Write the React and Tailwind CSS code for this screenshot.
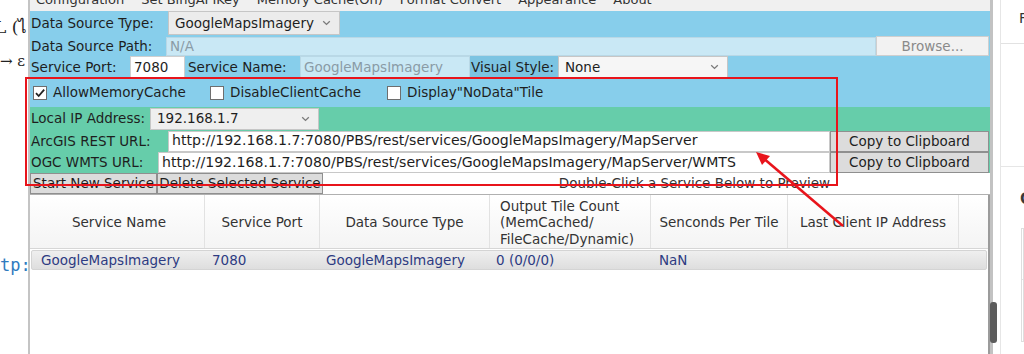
import React from "react";

function Chevron() {
  return (
    <svg width="9" height="6" viewBox="0 0 9 6" className="shrink-0">
      <path d="M1.2 1.2L4.5 4.4L7.8 1.2" stroke="#7a7a7a" strokeWidth="1.3" fill="none" />
    </svg>
  );
}

function Checkbox({ checked }) {
  return (
    <span className="w-[14px] h-[14px] shrink-0 border border-[#6e6e6e] bg-white flex items-center justify-center">
      {checked && (
        <svg width="12" height="12" viewBox="0 0 12 12">
          <path d="M2 6.2L4.7 9L10.2 2.6" stroke="#222" strokeWidth="1.8" fill="none" />
        </svg>
      )}
    </span>
  );
}

function Select({ value, className }) {
  return (
    <div className={"flex items-center justify-between border border-[#c6c6c6] bg-[#ececec] pl-[6px] pr-[8px] " + className}>
      <span className="whitespace-nowrap">{value}</span>
      <Chevron />
    </div>
  );
}

function GreyButton({ children, className }) {
  return (
    <div className={"flex items-center justify-center border border-[#8f8f8f] bg-[#dcdcdc] whitespace-nowrap " + className}>
      {children}
    </div>
  );
}

export default function App() {
  return (
    <div className="relative w-[1024px] h-[354px] overflow-hidden bg-white flex font-['DejaVu_Sans',sans-serif] text-[13.5px] text-[#1e1e1e]">
      {/* left strip (background document) */}
      <div className="w-[28px] shrink-0 flex flex-col overflow-hidden font-['DejaVu_Serif',serif] text-[#222]">
        <div className="h-[20px] -mt-[12px] pl-[15px] text-[16px] leading-[20px]">ᆢ</div>
        <div className="mt-[8px] -ml-[5px] whitespace-nowrap text-[17px] leading-[22px]">L (ไ</div>
        <div className="mt-[13px] whitespace-nowrap text-[15px] leading-[20px]">→ ε</div>
        <div className="mt-[183px] whitespace-nowrap font-['DejaVu_Sans_Mono',monospace] text-[17px] leading-[22px] text-[#2f7bbf]">tp:</div>
      </div>

      {/* application window */}
      <div className="w-[962px] shrink-0 flex flex-col border-l-2 border-[#c4c4c4]">
        {/* menu bar (scrolled partly out of view) */}
        <div className="h-[11px] shrink-0 overflow-hidden bg-[#f0f0f0]">
          <div className="-mt-[8px] flex pl-[6px] gap-[17px] leading-[16px] text-[13px] text-[#333] whitespace-nowrap">
            <span>Configuration</span>
            <span>Set BingAPIKey</span>
            <span>Memory Cache(On)</span>
            <span>Format Convert</span>
            <span>Appearance</span>
            <span>About</span>
          </div>
        </div>

        {/* blue section */}
        <div className="bg-[#87ceeb] flex flex-col">
          <div className="h-[24px] flex items-stretch">
            <div className="w-[138px] pl-[1px] flex items-center whitespace-nowrap">Data Source Type:</div>
            <Select value="GoogleMapsImagery" className="w-[172px]" />
          </div>
          <div className="h-[21px] flex items-center pt-[1px]">
            <div className="w-[136px] pl-[1px] whitespace-nowrap">Data Source Path:</div>
            <div className="w-[710px] h-[19px] bg-[#c9e8f5] border border-[#b9d8e6] flex items-center pl-[3px] text-[#8a9ba6]">N/A</div>
            <div className="w-[113px] h-[20px] bg-[#f2f2f2] border border-[#cfcfcf] flex items-center justify-center text-[#8a8a8a]">Browse...</div>
          </div>
          <div className="h-[22px] flex items-stretch">
            <div className="w-[100px] pl-[1px] flex items-center whitespace-nowrap">Service Port:</div>
            <div className="w-[55px] bg-white border border-[#cfcfcf] flex items-center pl-[3px]">7080</div>
            <div className="w-[115px] pl-[3px] flex items-center whitespace-nowrap">Service Name:</div>
            <div className="w-[170px] bg-[#c9e8f5] border border-[#b9d8e6] flex items-center pl-[3px] text-[#8a9ba6]">GoogleMapsImagery</div>
            <div className="w-[88px] bg-[#7cc4e2] flex items-center pl-[1px] whitespace-nowrap">Visual Style:</div>
            <Select value="None" className="w-[170px] bg-[#f6f6f6]" />
          </div>
          <div className="h-[29px] flex items-center pl-[3px]">
            <div className="w-[177px] flex items-center gap-[6px]">
              <Checkbox checked />
              <span className="whitespace-nowrap">AllowMemoryCache</span>
            </div>
            <div className="w-[177px] flex items-center gap-[6px]">
              <Checkbox />
              <span className="whitespace-nowrap">DisableClientCache</span>
            </div>
            <div className="flex items-center gap-[6px]">
              <Checkbox />
              <span className="whitespace-nowrap">Display"NoData"Tile</span>
            </div>
          </div>
        </div>

        {/* green section */}
        <div className="bg-[#66cdaa] flex flex-col">
          <div className="h-[23px] flex items-center">
            <div className="w-[120px] pl-[1px] whitespace-nowrap">Local IP Address:</div>
            <Select value="192.168.1.7" className="w-[169px] h-[22px] bg-[#efefef]" />
          </div>
          <div className="h-[22px] flex items-center">
            <div className="w-[138px] pl-[1px] whitespace-nowrap">ArcGIS REST URL:</div>
            <div className="w-[662px] h-[21px] bg-white border border-[#c8c8c8] flex items-center pl-[3px] whitespace-nowrap text-[14.1px]">
              http://192.168.1.7:7080/PBS/rest/services/GoogleMapsImagery/MapServer
            </div>
            <GreyButton className="w-[159px] h-[21px]">Copy to Clipboard</GreyButton>
          </div>
          <div className="h-[21px] flex items-center">
            <div className="w-[128px] pl-[1px] whitespace-nowrap">OGC WMTS URL:</div>
            <div className="w-[672px] h-[21px] bg-white border border-[#c8c8c8] flex items-center pl-[3px] whitespace-nowrap text-[14.1px]">
              http://192.168.1.7:7080/PBS/rest/services/GoogleMapsImagery/MapServer/WMTS
            </div>
            <GreyButton className="w-[159px] h-[21px]">Copy to Clipboard</GreyButton>
          </div>
        </div>

        {/* action row */}
        <div className="h-[22px] flex items-center bg-white border-b border-[#b0b0b0]">
          <GreyButton className="w-[127px] h-[21px]">Start New Service</GreyButton>
          <GreyButton className="w-[166px] h-[21px]">Delete Selected Service</GreyButton>
          <div className="flex-1" />
          <div className="mr-[160px] whitespace-nowrap text-[#333]">Double-Click a Service Below to Preview</div>
        </div>

        {/* service list */}
        <div className="flex-1 flex flex-col border-r-2 border-[#9b9b9b] bg-white">
          <div className="h-[54px] flex bg-gradient-to-b from-white to-[#f4f4f4] border-b border-[#d6d6d6] text-[#333]">
            <div className="w-[175px] border-r border-[#e2e2e2] flex items-center justify-center pl-[4px] pt-[2px]">Service Name</div>
            <div className="w-[115px] border-r border-[#e2e2e2] flex items-center justify-center pt-[2px]">Service Port</div>
            <div className="w-[170px] border-r border-[#e2e2e2] flex items-center justify-center pt-[2px]">Data Source Type</div>
            <div className="w-[161px] border-r border-[#e2e2e2] flex items-center pl-[10px] pt-[2px] leading-[16.5px]">
              <div>Output Tile Count<br />(MemCached/<br />FileCache/Dynamic)</div>
            </div>
            <div className="w-[137px] border-r border-[#e2e2e2] flex items-center justify-center pt-[2px] whitespace-nowrap">Senconds Per Tile</div>
            <div className="w-[171px] border-r border-[#e2e2e2] flex items-center justify-center pt-[2px] whitespace-nowrap">Last Client IP Address</div>
            <div className="flex-1" />
          </div>
          <div className="mx-[1px] mt-[1px] h-[20px] flex items-center rounded-[2px] border border-[#d4d4d4] bg-gradient-to-b from-[#efefef] to-[#dedede] text-[#2d3b82]">
            <div className="w-[173px] pl-[9px] whitespace-nowrap">GoogleMapsImagery</div>
            <div className="w-[115px] pl-[7px]">7080</div>
            <div className="w-[170px] pl-[6px] whitespace-nowrap">GoogleMapsImagery</div>
            <div className="w-[161px] pl-[6px] whitespace-nowrap">0 (0/0/0)</div>
            <div className="w-[137px] pl-[8px]">NaN</div>
          </div>
        </div>
      </div>

      {/* scrollbar */}
      <div className="w-[10px] shrink-0 flex">
        <div className="w-[3px] bg-[#c2c2c2] flex flex-col">
          <div className="mt-[302px] h-[41px] w-[7px] rounded-[3px] bg-[#5c5c5c]" />
        </div>
      </div>

      {/* right strip (background page) */}
      <div className="flex-1 flex flex-col border-l border-[#e6e6e6] overflow-hidden text-[#333]">
        <div className="h-[44px] border-b border-[#e2e2e2] pl-[18px] pt-[8px] text-[14px]">F</div>
        <div className="h-[123px] border-b border-[#e6e6e6]" />
        <div className="pl-[19px] pt-[23px] text-[15px] font-bold text-[#3a3a3a] leading-[18px]">C</div>
        <div className="ml-[20px] mt-[20px] h-[114px] border border-[#dedede] flex flex-col">
          <div className="h-[51px] border-b border-[#e2e2e2]" />
        </div>
      </div>

      {/* annotations */}
      <div className="absolute left-[25px] top-[77px] w-[813px] h-[109px] border-2 border-[#e8141b] pointer-events-none" />
      <svg className="absolute left-0 top-0 pointer-events-none" width="1024" height="354" viewBox="0 0 1024 354">
        <line x1="843" y1="226" x2="762" y2="157" stroke="#e8141b" strokeWidth="2.5" />
        <polygon points="756,152 770,156 762,165" fill="#e8141b" />
      </svg>
    </div>
  );
}
